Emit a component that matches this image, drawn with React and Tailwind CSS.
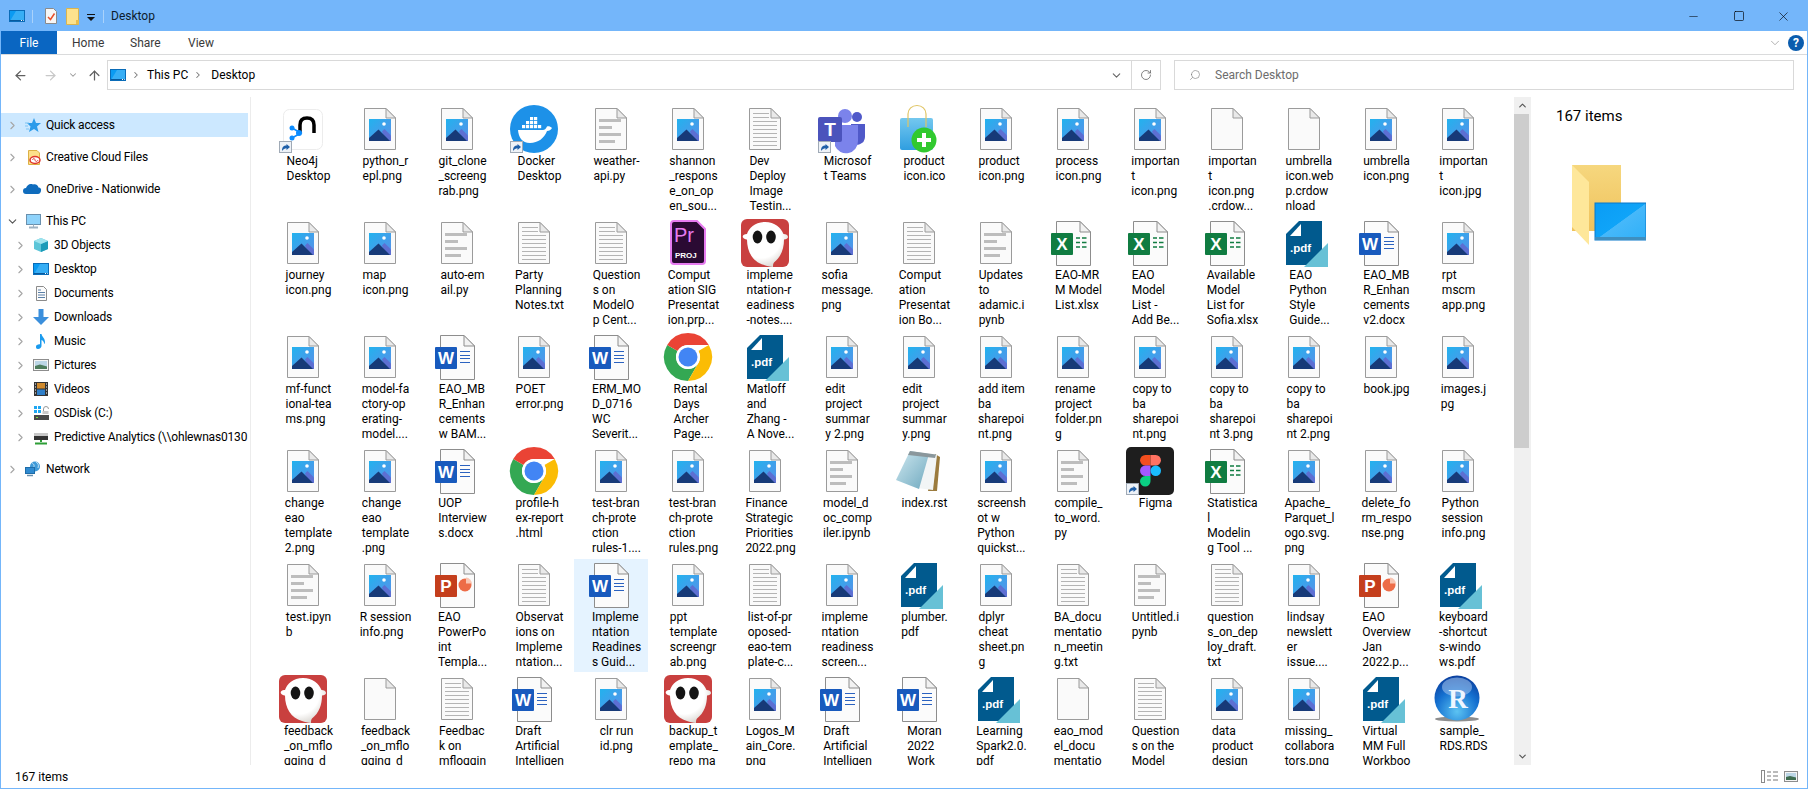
import { ArrowLeft, ArrowRight, ArrowUp, ChevronDown, ChevronRight, ChevronUp, Minus, RotateCw, Search, Square, X } from "lucide-react";

const font = { fontFamily: "Roboto, sans-serif" };

const rows = [
  ["neo4j:Neo4j|Desktop", "img:python_r|epl.png", "img:git_clone|_screeng|rab.png", "docker:Docker|Desktop", "py:weather-|api.py", "img:shannon|_respons|e_on_op|en_sou...", "txt:Dev|Deploy|Image|Testin...", "teams:Microsof|t Teams", "product:product|icon.ico", "img:product|icon.png", "img:process|icon.png", "img:importan|t|icon.png", "blank:importan|t|icon.png|.crdow...", "blank:umbrella|icon.web|p.crdow|nload", "img:umbrella|icon.png", "img:importan|t|icon.jpg"],
  ["img:journey|icon.png", "img:map|icon.png", "py:auto-em|ail.py", "txt:Party|Planning|Notes.txt", "txt:Question|s on|ModelO|p Cent...", "prem:Comput|ation SIG|Presentat|ion.prp...", "ghost:impleme|ntation-r|eadiness|-notes....", "img:sofia|message.|png", "txt:Comput|ation|Presentat|ion Bo...", "py:Updates|to|adamic.i|pynb", "xls:EAO-MR|M Model|List.xlsx", "xls:EAO|Model|List -|Add Be...", "xls:Available|Model|List for|Sofia.xlsx", "pdf:EAO|Python|Style|Guide...", "word:EAO_MB|R_Enhan|cements|v2.docx", "img:rpt|mscm|app.png"],
  ["img:mf-funct|ional-tea|ms.png", "img:model-fa|ctory-op|erating-|model....", "word:EAO_MB|R_Enhan|cements|w BAM...", "img:POET|error.png", "word:ERM_MO|D_0716|WC|Severit...", "chrome:Rental|Days|Archer|Page....", "pdf:Matloff|and|Zhang -|A Nove...", "img:edit|project|summar|y 2.png", "img:edit|project|summar|y.png", "img:add item|ba|sharepoi|nt.png", "img:rename|project|folder.pn|g", "img:copy to|ba|sharepoi|nt.png", "img:copy to|ba|sharepoi|nt 3.png", "img:copy to|ba|sharepoi|nt 2.png", "img:book.jpg", "img:images.j|pg"],
  ["img:change|eao|template|2.png", "img:change|eao|template|.png", "word:UOP|Interview|s.docx", "chrome:profile-h|ex-report|.html", "img:test-bran|ch-prote|ction|rules-1....", "img:test-bran|ch-prote|ction|rules.png", "img:Finance|Strategic|Priorities|2022.png", "py:model_d|oc_comp|iler.ipynb", "notepad:index.rst", "img:screensh|ot w|Python|quickst...", "py:compile_|to_word.|py", "figma:Figma", "xls:Statistica|l|Modelin|g Tool ...", "img:Apache_|Parquet_l|ogo.svg.|png", "img:delete_fo|rm_respo|nse.png", "img:Python|session|info.png"],
  ["py:test.ipyn|b", "img:R session|info.png", "ppt:EAO|PowerPo|int|Templa...", "txt:Observat|ions on|Impleme|ntation...", "word:Impleme|ntation|Readines|s Guid...", "img:ppt|template|screengr|ab.png", "txt:list-of-pr|oposed-|eao-tem|plate-c...", "img:impleme|ntation|readiness|screen...", "pdf:plumber.|pdf", "img:dplyr|cheat|sheet.pn|g", "txt:BA_docu|mentatio|n_meetin|g.txt", "py:Untitled.i|pynb", "txt:question|s_on_dep|loy_draft.|txt", "img:lindsay|newslett|er|issue....", "ppt:EAO|Overview|Jan|2022.p...", "pdf:keyboard|-shortcut|s-windo|ws.pdf"],
  ["ghost:feedback|_on_mflo|gging_d", "blank:feedback|_on_mflo|gging_d", "txt:Feedbac|k on|mfloggin", "word:Draft|Artificial|Intelligen", "img:clr run|id.png", "ghost:backup_t|emplate_|repo_ma", "img:Logos_M|ain_Core.|png", "word:Draft|Artificial|Intelligen", "word:Moran|2022|Work", "pdf:Learning|Spark2.0.|pdf", "blank:eao_mod|el_docu|mentatio", "txt:Question|s on the|Model", "img:data|product|design", "img:missing_|collabora|tors.png", "pdf:Virtual|MM Full|Workboo", "rds:sample_|RDS.RDS"],
];

const items = rows.flat().map((entry) => {
  const [kind, names] = entry.split(":");
  return { kind, lines: names.split("|") };
});

function Page({ x = 8, y = 3, w = 32, h = 42 }) {
  return (
    <>
      <path d={`M${x + 0.5} ${y + 0.5}H${x + w - 10}L${x + w - 0.5} ${y + 10}V${y + h - 0.5}H${x + 0.5}Z`} fill="#fafafa" stroke="#9b9b9b" />
      <path d={`M${x + w - 10} ${y + 0.5}V${y + 10}H${x + w - 0.5}Z`} fill="#e9e9e9" stroke="#9b9b9b" />
    </>
  );
}

function Shortcut() {
  return (
    <>
      <rect x="0.500" y="36.500" width="12" height="11" fill="#eef2f7" stroke="#a0aab6" />
      <path d="M3 46c0-4 1.500-5.500 4.500-5.500V39l3.500 3-3.500 3v-1.800c-1.800 0-3 .8-4.500 2.800Z" fill="#1f5fa8" />
    </>
  );
}

function OfficeDoc({ color, letter, children }) {
  return (
    <>
      <path d="M7.500 2.500H31L41.500 13V46.500H7.500Z" fill="#fbfbfb" stroke="#8d8d8d" />
      <path d="M31 2.500V13H41.500Z" fill="#f2f2f2" stroke="#8d8d8d" />
      {children}
      <rect x="2" y="14" width="22" height="22" rx="1" fill={color} />
      <text x="13" y="31" textAnchor="middle" fontSize="17" fontWeight="700" fill="#fff" fontFamily="Liberation Sans, sans-serif">{letter}</text>
    </>
  );
}

function FileIcon({ kind }) {
  let art = null;
  if (kind === "blank") art = <Page />;
  if (kind === "img") {
    art = (
      <>
        <Page />
        <defs>
          <linearGradient id="sky" x1="0" y1="0" x2="1" y2="1">
            <stop offset="0" stopColor="#22b2ee" />
            <stop offset="1" stopColor="#5b8fe8" />
          </linearGradient>
        </defs>
        <rect x="13" y="14" width="22" height="22" fill="url(#sky)" />
        <circle cx="28" cy="19" r="1.800" fill="#fff" />
        <path d="M26 26.500L28.500 24L35 30.500V36H30Z" fill="#5d6fd2" />
        <path d="M13 33L22.500 24.500L34 36H13Z" fill="#173a78" />
      </>
    );
  }
  if (kind === "py") {
    art = (
      <>
        <Page />
        <g fill="#bdbdbd">
          <rect x="12" y="14" width="22" height="3" />
          <rect x="12" y="21" width="13" height="3" />
          <rect x="12" y="28" width="22" height="3" />
          <rect x="12" y="35" width="16" height="3" />
        </g>
      </>
    );
  }
  if (kind === "txt") {
    art = (
      <>
        <Page />
        <g stroke="#b4b4b4">
          {[8.5, 12.5].map((y) => <path key={y} d={`M12 ${y}H28`} />)}
          {[16.5, 20.5, 24.5, 28.5, 32.5, 36.5, 40.5].map((y) => <path key={y} d={`M12 ${y}H36`} />)}
        </g>
      </>
    );
  }
  if (kind === "word") {
    art = (
      <OfficeDoc color="#185abd" letter="W">
        <g stroke="#2b62c0">
          {[18.5, 22.5, 25.5, 29.5].map((y) => <path key={y} d={`M27 ${y}H37`} />)}
        </g>
      </OfficeDoc>
    );
  }
  if (kind === "xls") {
    art = (
      <OfficeDoc color="#107c41" letter="X">
        <g stroke="#107c41" strokeWidth="1.500">
          {[19, 23.500, 28].map((y) => <path key={y} d={`M27 ${y}H31M33 ${y}H37.500`} />)}
        </g>
      </OfficeDoc>
    );
  }
  if (kind === "ppt") {
    art = (
      <OfficeDoc color="#c43e1c" letter="P">
        <circle cx="32" cy="24" r="6.500" fill="#ed6c47" />
        <path d="M33 16.500a6.500 6.500 0 0 1 6 6h-6Z" fill="#f9c6b3" />
      </OfficeDoc>
    );
  }
  if (kind === "pdf") {
    art = (
      <>
        <path d="M6 15L19 2H42V46H6Z" fill="#015a8e" />
        <path d="M21 5V17H10Z" fill="#fff" />
        <text x="10" y="33" fontSize="11.500" fontWeight="700" fill="#fff" fontFamily="Liberation Sans, sans-serif">.pdf</text>
        <path d="M48 24V48H24Z" fill="#67c1d6" />
      </>
    );
  }
  if (kind === "chrome") {
    art = (
      <>
        <path d="M3.200 12A24 24 0 0 0 24 48L34.400 30A12 12 0 0 1 13.600 18Z" fill="#34a853" />
        <path d="M44.800 12A24 24 0 0 1 24 48L34.400 30A12 12 0 0 0 34.400 18Z" fill="#fbbc05" />
        <path d="M3.200 12A24 24 0 0 1 44.800 12H24A12 12 0 0 0 13.600 18Z" fill="#ea4335" />
        <circle cx="24" cy="24" r="12" fill="#fff" />
        <circle cx="24" cy="24" r="9.500" fill="#4285f4" />
      </>
    );
  }
  if (kind === "docker") {
    art = (
      <>
        <circle cx="24" cy="24" r="24" fill="#1d91e8" />
        <path d="M8 25H33c1.500 0 3-1 4-3.500 1.500-.5 3.500 0 5 1.500-1 2-3 3-5 3-2.500 7-9 12-17 12-8 0-11.500-6-12-13Z" fill="#fff" />
        <g fill="#fff">
          {[[12, 20], [16, 20], [20, 20], [24, 20], [28, 20], [16, 16], [20, 16], [24, 16], [20, 12], [24, 12]].map(([x, y]) => <rect key={`${x}${y}`} x={x} y={y} width="3.200" height="3.200" />)}
        </g>
        <Shortcut />
      </>
    );
  }
  if (kind === "neo4j") {
    art = (
      <>
        <rect x="4.500" y="4.500" width="39" height="40" rx="6" fill="#fff" stroke="#ececec" />
        <path d="M21 28V20c0-5 3-7 7-7s7 2 7 7v8" fill="none" stroke="#000" strokeWidth="3.500" />
        <path d="M13 23L22 28L13 33" fill="none" stroke="#0b8cff" strokeWidth="1.500" />
        <circle cx="13" cy="23" r="2.500" fill="#0b8cff" />
        <circle cx="13" cy="33" r="2.500" fill="#0b8cff" />
        <circle cx="20" cy="28" r="3" fill="#0b8cff" />
        <Shortcut />
      </>
    );
  }
  if (kind === "teams") {
    art = (
      <>
        <circle cx="39" cy="12" r="5" fill="#5059c9" />
        <path d="M33 19H47V32a8 8 0 0 1-14 5Z" fill="#5059c9" />
        <circle cx="27" cy="11" r="7" fill="#7b83eb" />
        <path d="M17 20H40V36a12 12 0 0 1-23 5Z" fill="#7b83eb" />
        <rect x="0" y="12" width="24" height="25" rx="2" fill="#4b53bc" />
        <text x="12" y="31" textAnchor="middle" fontSize="19" fontWeight="700" fill="#fff" fontFamily="Liberation Sans, sans-serif">T</text>
        <Shortcut />
      </>
    );
  }
  if (kind === "product") {
    art = (
      <>
        <defs>
          <linearGradient id="bag" x1="0" y1="0" x2="0" y2="1">
            <stop offset="0" stopColor="#74c8ef" />
            <stop offset="1" stopColor="#2f9ee0" />
          </linearGradient>
        </defs>
        <rect x="5" y="13" width="33" height="32" rx="2" fill="url(#bag)" />
        <path d="M13 22V9c0-5 4-8.500 9-8.500s9 3.500 9 8.500v13" fill="none" stroke="#e0c566" strokeWidth="1.200" />
        <circle cx="29" cy="35" r="12.500" fill="#31c92f" />
        <path d="M29 28V42M22 35H36" stroke="#fff" strokeWidth="4" />
      </>
    );
  }
  if (kind === "ghost") {
    art = (
      <>
        <defs>
          <radialGradient id="ghostBody" cx="0.400" cy="0.350" r="0.750">
            <stop offset="0.600" stopColor="#fff" />
            <stop offset="1" stopColor="#cfcac4" />
          </radialGradient>
        </defs>
        <rect width="48" height="48" rx="6" fill="#c9403f" />
        <path d="M24 3C14 3 8 9 6 15c-3 0-5 1.500-4 3.500 1 1.500 3 2 4 2C6 33 12 43 23 46c3 .8 6 2 9 2 0-2 0-3 1-4.500C40 38 43 30 43 20.500c2 0 4-1 4-2.500 0-2-2-3-4.500-3C40 9 34 3 24 3Z" fill="url(#ghostBody)" />
        <ellipse cx="16.500" cy="18" rx="4.800" ry="6.500" fill="#141414" />
        <ellipse cx="30" cy="18" rx="4.800" ry="6.500" fill="#141414" />
      </>
    );
  }
  if (kind === "prem") {
    art = (
      <>
        <path d="M10 2H33L41 10V42a3 3 0 0 1-3 3H10a3 3 0 0 1-3-3V5a3 3 0 0 1 3-3Z" fill="#2a0a33" stroke="#e77cf0" strokeWidth="2" />
        <text x="10" y="23" fontSize="20" fontWeight="500" fill="#e77cf0" fontFamily="Liberation Sans, sans-serif">Pr</text>
        <text x="11" y="39" fontSize="8" fontWeight="700" fill="#fff" fontFamily="Liberation Sans, sans-serif">PROJ</text>
      </>
    );
  }
  if (kind === "notepad") {
    art = (
      <>
        <defs>
          <linearGradient id="padCover" x1="0" y1="0" x2="1" y2="1">
            <stop offset="0" stopColor="#cfe8f0" />
            <stop offset="1" stopColor="#6fa9bf" />
          </linearGradient>
        </defs>
        <path d="M40 7L45 10L42 44H33Z" fill="#9b7b3e" />
        <path d="M15 4L42 8L38 43L22 41Z" fill="#f2f5f6" />
        <path d="M15 4L34 7L24 42L1 33Z" fill="url(#padCover)" />
        <path d="M15 4L41 7.500L40 11L13 8Z" fill="#8a979c" />
      </>
    );
  }
  if (kind === "figma") {
    art = (
      <>
        <rect width="48" height="48" rx="5" fill="#1e1e1e" />
        <path d="M24.500 8H19.300a5.250 5.250 0 0 0 0 10.500H24.500Z" fill="#f24e1e" />
        <path d="M24.500 8H29.700a5.250 5.250 0 0 1 0 10.500H24.500Z" fill="#ff7262" />
        <path d="M24.500 18.500H19.300a5.250 5.250 0 0 0 0 10.500H24.500Z" fill="#a259ff" />
        <circle cx="29.750" cy="23.750" r="5.250" fill="#1abcfe" />
        <path d="M19.300 29H24.500V34.250a5.250 5.250 0 1 1-5.200-5.250Z" fill="#0acf83" />
        <Shortcut />
      </>
    );
  }
  if (kind === "rds") {
    art = (
      <>
        <defs>
          <radialGradient id="rBall" cx="0.500" cy="0.800" r="0.800">
            <stop offset="0" stopColor="#5cc3f2" />
            <stop offset="0.600" stopColor="#1470d0" />
            <stop offset="1" stopColor="#0b3f9e" />
          </radialGradient>
        </defs>
        <ellipse cx="23" cy="44" rx="22" ry="2.500" fill="#8d8d8d" />
        <circle cx="23" cy="23" r="22.500" fill="url(#rBall)" />
        <ellipse cx="23" cy="12" rx="15" ry="9.500" fill="#a9c8ee" opacity="0.550" />
        <text x="24" y="33" textAnchor="middle" fontSize="27" fontWeight="700" fill="#eef6ff" fontFamily="Liberation Serif, serif">R</text>
      </>
    );
  }
  return <svg width="48" height="48" viewBox="0 0 48 48" className="shrink-0 overflow-visible">{art}</svg>;
}

function FileCell({ item, selected }) {
  return (
    <div className={`flex flex-col items-center overflow-hidden pt-[2px] ${selected ? "bg-[#e5f3ff]" : ""}`}>
      <FileIcon kind={item.kind} />
      <div className="mt-[1px] pl-[11px] text-left whitespace-nowrap text-[12px] leading-[15px] text-black">
        {item.lines.map((line, index) => <div key={index}>{line}</div>)}
      </div>
    </div>
  );
}

function Monitor({ size = 16 }) {
  return (
    <svg width={size} height={size} viewBox="0 0 16 16" className="shrink-0">
      <rect x="0.500" y="2.500" width="15" height="11" fill="#0b9bf2" stroke="#0a6cb8" />
      <path d="M1 13L7 3H15V13Z" fill="#37aef5" />
      <path d="M1 12.500H15" stroke="#075a9e" />
      <path d="M12 12.500h1M14 12.500h.7" stroke="#fff" />
    </svg>
  );
}

const navIcons = {
  star: (
    <g>
      <path d="M9 1L11 6H16L12 9.500L13.500 15L9 12L4 15L5.500 9.500L2 6H7Z" fill="#2b9bea" />
      <path d="M0 6H4M0 9H3M1 12H4" stroke="#7cc4f2" />
    </g>
  ),
  cc: (
    <g>
      <path d="M3.500 1.500H12L14.500 4V15.500H3.500Z" fill="#fde08b" stroke="#dcb046" />
      <ellipse cx="10" cy="11" rx="5" ry="3.500" fill="#fff" stroke="#e0352b" strokeWidth="1.500" />
      <path d="M7.500 11c1-2 2-2 2.500 0s2 2 3 0" fill="none" stroke="#e0352b" />
    </g>
  ),
  cloud: <path d="M1 13a3 3 0 0 1 0-6c1-3 4-5 7-3.500 3-1 5 1 5.500 3 2 0 3 1.500 2.500 3.500-.4 2-1.500 3-3 3Z" fill="#0f6cbd" />,
  pc: (
    <g>
      <rect x="1.500" y="1.500" width="14" height="10" fill="#8fd3fb" stroke="#6a90ad" />
      <path d="M4 14.500H13" stroke="#9fb2c2" strokeWidth="2" />
      <path d="M8.500 11.500V14" stroke="#9fb2c2" />
    </g>
  ),
  cube: (
    <g>
      <path d="M8 1L15 4V12L8 15L1 12V4Z" fill="#5cc5d8" />
      <path d="M8 7L15 4V12L8 15Z" fill="#1c9bb8" />
      <path d="M1 4L8 1L15 4L8 7Z" fill="#9fe4ee" />
    </g>
  ),
  doc: (
    <g>
      <path d="M3.500 1.500H10.500L13.500 4.500V15.500H3.500Z" fill="#fbfbfb" stroke="#8b8b8b" />
      <path d="M5 5h3M5 7.500h7M5 10h7M5 12.500h7" stroke="#5a7fa6" />
    </g>
  ),
  down: <path d="M5.500 0H10.500V8H16L8 16L0 8H5.500Z" fill="#3b8fdc" />,
  music: <path d="M7 1H8.500C9 4 12 5 12 9c0 1-.5 2-1 2 .2-2-1-3.500-2.500-4V13c0 1.500-1.500 3-3.500 3S3 15 3 13.500 5 11 7 11.300Z" fill="#1b9bee" />,
  picture: (
    <g>
      <rect x="0.500" y="2.500" width="15" height="11" fill="#f5f5f5" stroke="#8d8d8d" />
      <rect x="2" y="4" width="12" height="8" fill="#bcd6e6" />
      <path d="M2 9L7 7.500L14 9.500V12H2Z" fill="#4d7c5c" />
    </g>
  ),
  video: (
    <g>
      <rect x="1" y="1" width="14" height="14" fill="#333" />
      <rect x="4" y="2" width="8" height="5.500" fill="#d08a2d" />
      <rect x="4" y="8.500" width="8" height="5.500" fill="#2f7fc9" />
      <path d="M2 3h1M2 6h1M2 9h1M2 12h1M13 3h1M13 6h1M13 9h1M13 12h1" stroke="#fff" />
    </g>
  ),
  disk: (
    <g>
      <rect x="1" y="10" width="15" height="5" fill="#4a4a4a" />
      <path d="M3 12.500H5" stroke="#7ddb3a" />
      <rect x="1" y="1" width="3" height="3" fill="#1ea7f2" />
      <rect x="5" y="1" width="3" height="3" fill="#1ea7f2" />
      <rect x="1" y="5" width="3" height="3" fill="#1ea7f2" />
      <rect x="5" y="5" width="3" height="3" fill="#1ea7f2" />
      <path d="M10.500 8V4a2.500 2.500 0 0 1 5 0" fill="none" stroke="#9a9a9a" />
      <rect x="9.500" y="6" width="6" height="3" fill="#c9c9c9" />
    </g>
  ),
  share: (
    <g>
      <rect x="1" y="4" width="14" height="3" fill="#c8c8c8" />
      <rect x="1" y="7" width="14" height="4" fill="#333" />
      <path d="M8 11V13M2 14.500H14" stroke="#2e9e37" strokeWidth="2" />
    </g>
  ),
  network: (
    <g>
      <circle cx="10" cy="5.500" r="5" fill="#3f9ad8" />
      <path d="M7 2c2 1 3 3 1 5M11 1c2 1 3 3 2 6" stroke="#c5e4f5" fill="none" />
      <rect x="0.500" y="6.500" width="9" height="6" fill="#2f8ad0" stroke="#1e6ca8" />
      <path d="M2 14.500H8" stroke="#6a90ad" strokeWidth="1.500" />
    </g>
  ),
};

const navGroups = [
  [{ icon: "star", label: "Quick access", selected: true }],
  [{ icon: "cc", label: "Creative Cloud Files" }],
  [{ icon: "cloud", label: "OneDrive - Nationwide" }],
  [
    { icon: "pc", label: "This PC", open: true },
    { icon: "cube", label: "3D Objects", child: true },
    { icon: "desktop", label: "Desktop", child: true },
    { icon: "doc", label: "Documents", child: true },
    { icon: "down", label: "Downloads", child: true },
    { icon: "music", label: "Music", child: true },
    { icon: "picture", label: "Pictures", child: true },
    { icon: "video", label: "Videos", child: true },
    { icon: "disk", label: "OSDisk (C:)", child: true },
    { icon: "share", label: "Predictive Analytics (\\\\ohlewnas0130", child: true },
  ],
  [{ icon: "network", label: "Network" }],
];

function NavRow({ row }) {
  return (
    <div className={`flex h-[24px] w-[247px] items-center overflow-hidden whitespace-nowrap text-[12px] tracking-[-0.18px] text-black ${row.selected ? "bg-[#cce8ff]" : ""} ${row.child ? "pl-[13px]" : "pl-[5px]"}`}>
      {row.open
        ? <ChevronDown size={13} strokeWidth={2} className="shrink-0 text-[#555]" />
        : <ChevronRight size={13} strokeWidth={2} className="shrink-0 text-[#a6a6a6]" />}
      <span className="ml-[6px] mr-[5px] flex w-[16px] shrink-0 items-center justify-center">
        {row.icon === "desktop"
          ? <Monitor />
          : <svg width="16" height="16" viewBox="0 0 16 16" className="shrink-0 overflow-visible">{navIcons[row.icon]}</svg>}
      </span>
      <span>{row.label}</span>
    </div>
  );
}

function BigFolderIcon() {
  return (
    <svg width="74" height="80" viewBox="0 0 74 80">
      <defs>
        <linearGradient id="folderBack" x1="0" y1="0" x2="0" y2="1">
          <stop offset="0" stopColor="#f6d77e" />
          <stop offset="1" stopColor="#efc25c" />
        </linearGradient>
        <linearGradient id="screen" x1="0" y1="0" x2="1" y2="1">
          <stop offset="0" stopColor="#0a9cf5" />
          <stop offset="0.500" stopColor="#0fa4f8" />
          <stop offset="0.510" stopColor="#46b8fa" />
          <stop offset="1" stopColor="#2fb0f8" />
        </linearGradient>
      </defs>
      <rect x="0" y="0" width="49" height="66" fill="url(#folderBack)" />
      <path d="M0 0L17 17V80L0 62Z" fill="#fee79a" />
      <rect x="23" y="38" width="51" height="37" fill="url(#screen)" stroke="#0b79c9" />
      <path d="M23 72H74V75H23Z" fill="#3e8fc0" />
    </svg>
  );
}

export default function App() {
  return (
    <div style={font} className="box-border flex h-screen w-full flex-col overflow-hidden border border-[#74b6fa] bg-white text-[12px] text-black">
      {/* title bar */}
      <div className="flex h-[30px] shrink-0 items-center bg-[#74b6fa] pl-[8px]">
        <Monitor />
        <div className="ml-[7px] h-[13px] w-px bg-[#a9d2fb]" />
        <svg width="14" height="16" viewBox="0 0 14 16" className="ml-[11px]">
          <path d="M1.500.5H9.500L12.500 3.500V15.500H1.500Z" fill="#f6f6f6" stroke="#8a8a8a" />
          <path d="M4 9L6.500 11.500L10.500 5.500" fill="none" stroke="#e8502a" strokeWidth="1.500" />
        </svg>
        <svg width="14" height="17" viewBox="0 0 14 17" className="ml-[8px]">
          <path d="M.5.5H12.500V16.500H.5Z" fill="#fde28d" stroke="#d9b44f" />
          <path d="M10 12H13V16H10Z" fill="#e9bd4d" />
        </svg>
        <svg width="8" height="8" viewBox="0 0 8 8" className="ml-[7px] mt-[3px]">
          <path d="M0 .5H8" stroke="#111" />
          <path d="M0 3H8L4 7Z" fill="#111" />
        </svg>
        <div className="ml-[8px] h-[13px] w-px bg-[#a9d2fb]" />
        <span className="ml-[7px] text-[#0c1b2c]">Desktop</span>
        <div className="ml-auto flex items-center">
          <div className="flex w-[45px] justify-center"><Minus size={13} strokeWidth={1} /></div>
          <div className="flex w-[45px] justify-center"><Square size={12} strokeWidth={1.300} /></div>
          <div className="mr-[1px] flex w-[45px] justify-center"><X size={15} strokeWidth={1} /></div>
        </div>
      </div>

      {/* ribbon tabs */}
      <div className="flex h-[24px] shrink-0 border-b border-[#dadbdc]">
        <div className="flex w-[56px] items-center justify-center bg-[#0a66c2] text-white">File</div>
        {["Home", "Share", "View"].map((tab) => (
          <div key={tab} className="flex w-[58px] items-center pl-[15px] text-[#3a3a3a]">{tab}</div>
        ))}
        <div className="ml-auto mr-[3px] flex items-center">
          <ChevronDown size={14} strokeWidth={1.300} className="mr-[6px] text-[#9a9a9a]" />
          <span className="flex h-[16px] w-[16px] items-center justify-center rounded-full bg-[#0a5cae] text-[12px] font-bold text-white">?</span>
        </div>
      </div>

      {/* address row */}
      <div className="flex h-[42px] shrink-0 items-start pt-[5px]">
        <div className="flex h-[30px] w-[106px] shrink-0 items-center">
          <ArrowLeft size={15} strokeWidth={2} className="ml-[12px] text-[#606060]" />
          <ArrowRight size={15} strokeWidth={2} className="ml-[15px] text-[#c8c8c8]" />
          <ChevronDown size={10} strokeWidth={2.500} className="ml-[10px] text-[#9a9a9a]" />
          <ArrowUp size={15} strokeWidth={2} className="ml-[9px] text-[#606060]" />
        </div>
        <div className="flex h-[30px] w-[1054px] shrink-0 items-center border border-[#d9d9d9] pl-[2px] text-[12px]">
          <Monitor />
          <ChevronRight size={10} strokeWidth={2.500} className="ml-[5px] text-[#777]" />
          <span className="ml-[6px]">This PC</span>
          <ChevronRight size={10} strokeWidth={2.500} className="ml-[5px] text-[#777]" />
          <span className="ml-[8px]">Desktop</span>
          <ChevronDown size={13} strokeWidth={2} className="ml-auto mr-[8px] text-[#666]" />
          <div className="flex h-full w-[29px] items-center justify-center border-l border-[#d9d9d9]">
            <RotateCw size={12} strokeWidth={1.600} className="text-[#666]" />
          </div>
        </div>
        <div className="ml-[13px] flex h-[30px] w-[620px] shrink-0 items-center border border-[#d9d9d9] pl-[14px]">
          <Search size={12} strokeWidth={1.200} className="-scale-x-100 text-[#777]" />
          <span className="ml-[14px] text-[#6d6d6d]">Search Desktop</span>
        </div>
      </div>

      {/* main area */}
      <div className="flex min-h-0 flex-1">
        <div className="w-[250px] shrink-0 border-r border-[#ececec] pt-[16px]">
          {navGroups.map((group, index) => (
            <div key={index} className="mb-[8px]">
              {group.map((row) => <NavRow key={row.label} row={row} />)}
            </div>
          ))}
        </div>
        <div className="w-[1263px] shrink-0 overflow-hidden pl-[15px] pt-[6px]">
          <div className="grid grid-cols-[repeat(16,74px)] auto-rows-[113px] gap-x-[3px] gap-y-[1px]">
            {items.map((item, index) => <FileCell key={index} item={item} selected={index === 68} />)}
          </div>
        </div>
        <div className="flex w-[16px] shrink-0 flex-col bg-[#f0f0f0]">
          <div className="flex h-[17px] items-center justify-center"><ChevronUp size={11} strokeWidth={2.500} className="text-[#555]" /></div>
          <div className="h-[334px] border-r border-[#f0f0f0] bg-[#cdcdcd]" />
          <div className="flex-1" />
          <div className="flex h-[17px] items-center justify-center"><ChevronDown size={11} strokeWidth={2.500} className="text-[#555]" /></div>
        </div>
        <div className="flex-1 border-l border-[#f0f0f0] pl-[25px] pt-[9px]">
          <div className="text-[15px] leading-[20px]">167 items</div>
          <div className="ml-[16px] mt-[39px]"><BigFolderIcon /></div>
        </div>
      </div>

      {/* status bar */}
      <div className="flex h-[23px] shrink-0 items-center pl-[14px] pr-[9px]">
        <span>167 items</span>
        <div className="ml-auto flex items-center">
          <svg width="17" height="13" viewBox="0 0 17 13">
            <rect x="0.500" y="0.500" width="3" height="12" fill="#fff" stroke="#8a8a8a" />
            <path d="M6 2h4M12 2h5M6 6h4M12 6h5M6 10h4M12 10h5" stroke="#777" />
          </svg>
          <svg width="14" height="11" viewBox="0 0 14 11" className="ml-[6px]">
            <rect x="0.500" y="0.500" width="13" height="10" fill="#f5f5f5" stroke="#8d8d8d" />
            <rect x="2" y="2" width="10" height="7" fill="#bcd6e6" />
            <path d="M2 6L6 5L12 6.500V9H2Z" fill="#3f6d50" />
          </svg>
        </div>
      </div>
    </div>
  );
}
